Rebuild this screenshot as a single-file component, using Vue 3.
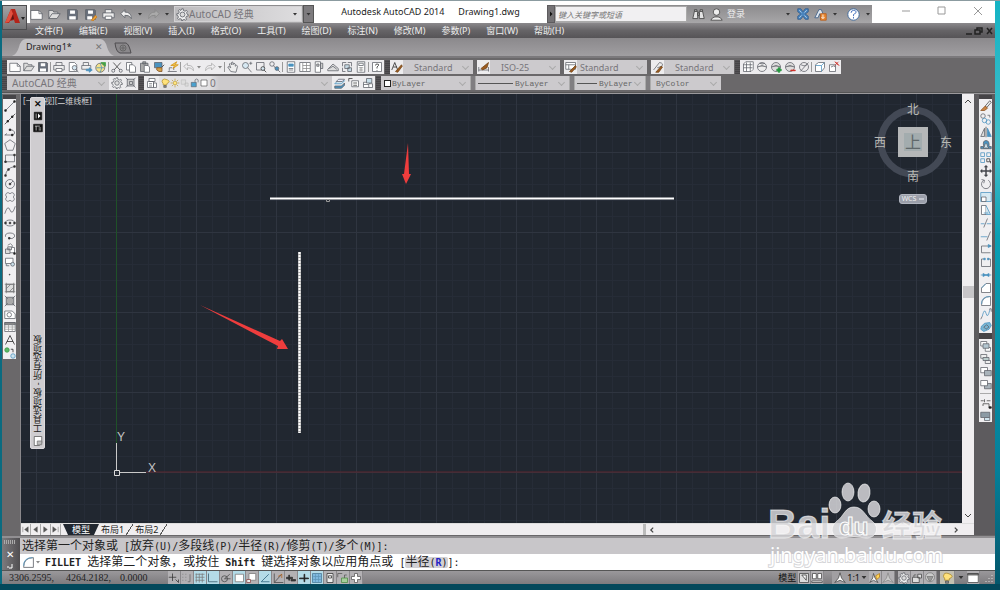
<script setup>
import { h } from 'vue'

const K = '#5d6068'
const B = '#4a92bf'
const page = `${K}|#fff|M3 2h7l3 3v9H3z`

// Each layer is "stroke|fill|path"
const icons = {
  new: [`${K}|#fdfdfd|M1 3h10l4 4v7H1z`, `${K}|none|M11 3v4h4`],
  open: [`${K}|#ddd|M1 13V3h5l1 2h5v2M1 13l4-6h10l-4 6z`],
  save: [`${K}|#69707c|M2 2h11l1 1v11H2z`, `none|#fff|M5 3h6v4H5zM4 10h8v4H4z`],
  saveas: [`${K}|#69707c|M2 2h11l1 1v11H2z`, `none|#fff|M5 3h6v4H5zM4 10h6v4H4z`, `#c77a1a|#e9a13b|M9 15l5-6 2 2-5 5z`],
  print: [`${K}|#eee|M4 6V2h8v4M1 6h14v6H1z`, `${K}|#fff|M4 10h8v4H4z`],
  undo: [`${K}|#eee|M1 7l5-5v3q8 0 8 8-3-5-8-4v3z`],
  redo: [`#888|#aaa|M15 7l-5-5v3q-8 0-8 8 3-5 8-4v3z`],
  undo2: [`#aaa|none|M1 7l5-4v3q8-1 8 7-3-5-8-4v3z`],
  redo2: [`#aaa|none|M15 7l-5-4v3q-8-1-8 7 3-5 8-4v3z`],
  gear: [`${K}|#f1f1f1|M7 1h2v2l2 1 2-1 1 1-1 2 1 2h1v2h-2l-1 2 1 2-1 1-2-1-2 1v1H7v-2l-2-1-2 1-1-1 1-2-1-2H1V7h2l1-2-1-2 1-1 2 1z`, `${K}|#ddd|M5 8a3 3 0 1 0 6 0 3 3 0 1 0-6 0`],
  preview: [page, `${K}|#d7e8f2|M7 9a3 3 0 1 0 6 0 3 3 0 1 0-6 0M12 11l3 4`],
  publish: [`${K}|#eee|M3 6V2h7v4M1 6h12v5H1z`, `${B}|${B}|M7 11h4V9l4 3-4 3v-2H7z`],
  dwf: [`${K}|#f3e18a|M1 9a6 6 0 1 0 12 0 6 6 0 1 0-12 0`, `${B}|none|M2 9h10M7 3q4 6 0 12`, `#46a147|#46a147|M8 2h6v5l-3-2z`],
  cut: [`#333|none|M3 2l9 10M13 2L4 12`, `${K}|none|M1 13a2 2 0 1 0 4 0 2 2 0 1 0-4 0M11 13a2 2 0 1 0 4 0 2 2 0 1 0-4 0`],
  copy: [`${K}|#fff|M2 2h7v10H2z`, `${K}|#fff|M6 5h5l3 3v7H6z`],
  paste: [`${K}|#aaa|M2 3h10v11H2zM5 1h4v3H5z`, `${K}|#fff|M7 6h5l2 2v7H7z`],
  match: [`${K}|${B}|M2 2h10v7H2z`, `#805020|#d3a14b|M5 9h7v5H8l-3-2z`, `#333|none|M12 8l3-3`],
  block: [`${K}|none|M1 14h12M3 13V9h4M9 12V8`, `#d09316|#f3c24a|M5 6l8-5-2 4h4l-7 5 2-4z`],
  pan: [`${K}|#eee|M5 14L1 8q1-2 4 1L3 4q1-2 3 1V2q2-2 2 1v2q1-4 3-1v3q2-3 3 0l-2 8z`],
  zoom: [`${K}|#d7e8f2|M2 6a4 4 0 1 0 8 0 4 4 0 1 0-8 0`, `${K}|none|M9 9l5 6M11 3h4M13 1v4`],
  zoomw: [`${K}|none|M2 2h10v10H2z`, `#333|#d7e8f2|M8 10a2 2 0 1 0 5 0 2 2 0 1 0-5 0M12 12l3 3`],
  zoomp: [`${K}|none|M1 4a3 3 0 1 0 6 0 3 3 0 1 0-6 0M6 6l3 4`, `${K}|${B}|M8 10a2 2 0 1 0 5 0 2 2 0 1 0-5 0M12 12l3 3`],
  props: [`${K}|#fff|M3 1h10v14H3z`, `${B}|${B}|M5 4h6v3H5z`, `${K}|none|M5 10h6M5 12h6`],
  dcenter: [`${K}|#fff|M1 2h14v12H1z`, `#888|none|M5 2v12M5 6h10M5 10h10M10 2v12`],
  palette: [`${K}|#fff|M3 1h7v14H3z`, `${K}|#ccc|M10 3h3v7h-3zM5 4h3v3H5z`],
  sheet: [`${K}|#ddd|M1 11l7-7 7 6v3H1zM3 10l5-3 5 4`],
  markup: [`${K}|none|M2 7V2h5M9 2h5v5M2 9v5h4`, `${K}|#c5d9e4|M5 5h6v5H5zM9 9h5v5H9z`],
  calc: [`${K}|#fff|M3 1h10v14H3zM5 3h6v3H5z`, `#888|none|M5 9h6M5 12h6M8 8v6`],
  help: [`${K}|#fff|M2 2h12v12H2z`, `#222|none|M6 6q0-2 2-2 3 0 2 2l-2 2v2M8 12v1`],
  tstyle: [`#222|none|M1 12L5 2l4 10M3 8h5`, `#704417|#9c5b20|M6 14l8-9 1 2-6 8z`],
  dstyle: [`${K}|none|M1 8v6M14 8v6M1 12h13`, `#704417|#9c5b20|M4 10l10-8-2 7-6 3z`],
  tbstyle: [`${K}|#fff|M1 2h13v9H1zM1 5h13M5 5v6`, `#704417|#9c5b20|M6 14l8-8 1 2-6 7z`],
  mstyle: [`${K}|#eee|M2 12L10 2q6 1 3 5L7 9`, `#704417|#9c5b20|M5 15l7-8 2 1-5 7z`],
  sphere: [`${K}|#eee|M2 8a6 6 0 1 0 12 0 6 6 0 1 0-12 0`, `${K}|#bbb|M2 8q6-4 12 0M5 3q3 2 7 0`],
  spherep: [`${K}|#ddd|M2 8a6 6 0 1 0 12 0 6 6 0 1 0-12 0`, `${K}|#aaa|M2 8q6-4 12 0`, `#22963b|#22963b|M9 11h2V9h2v2h2v2h-2v2h-2v-2H9z`],
  spherem: [`${K}|#ddd|M2 8a6 6 0 1 0 12 0 6 6 0 1 0-12 0`, `${K}|#aaa|M2 8q6-4 12 0`, `#cf2a20|#cf2a20|M9 12h6v1H9z`],
  spheren: [`${K}|none|M2 8a6 6 0 1 0 12 0 6 6 0 1 0-12 0M3 14L14 2M4 5q4 3 8 0`],
  mesh: [`${K}|#fff|M2 4l3-3h10v10l-3 3H2z`, `${K}|none|M2 5h12M2 9h12M6 2v12M11 2v12`],
  box3: [`${K}|#fff|M2 5l4-3h8v7l-4 5H2z`, `${B}|none|M2 6h8v8M10 6l4-4`],
  box3x: [`${K}|#fff|M2 5h8v9H2zM4 8q4-3 6 0`, `#cf2a20|none|M9 1l5 5M14 1L9 6M10 1l5 5`],
  layers: [`${K}|#fff|M2 7h8v7H2zM2 10h8`, `${K}|#c9dfea|M6 2h7v6H6z`, `${K}|#fff|M9 9h5v5H9z`],
  layermgr: [`${K}|#fff|M4 2h8v4H4zM2 6h8v8H2zM10 8h4v6h-4z`, `${K}|none|M4 9h4M4 12h4`],
  stack: [`${B}|#cfe4ee|M1 9h9l4-4H5z`, `${K}|${B}|M1 12h9l4-4v3l-4 4H1z`, `${K}|#eef|M3 6h8l3-3H6z`],
  stackp: [`${K}|#fff|M5 5h9v8H5z`, `#333|none|M1 2h5M1 2v4M7 8h5M7 11h5`],
  bulb: [`#a58324|#ffe27b|M5 9q-3-3-1-6t8 0-1 6v2H5z`, `#555|#888|M6 12h4v3H6z`],
  sun: [`#b6902a|#ffe680|M5 8a3 3 0 1 0 6 0 3 3 0 1 0-6 0`, `#b6902a|none|M8 1v3M8 12v3M1 8h3M12 8h3M3 3l2 2M11 11l2 2M13 3l-2 2M5 11l-2 2`],
  faint: [`#bbb|#ddd|M2 3h7v7H2zM8 8h5v5H8z`],
  unlock: [`${K}|#4aa1cf|M2 7h8v7H2z`, `${K}|none|M8 7V3q3-3 5 0v4`],
  sq: [`#222|#fff|M2 2h12v12H2z`],
  wset: [`${K}|#ccc|M3 3h9v9H3z`, `${K}|none|M1 1l3 3M14 1l-3 3M1 14l3-3M14 14l-3-3M6 6h4v4H6z`],
  line: [`${K}|none|M2 14L14 2`, `#222|#222|M1 13h2v2H1zM13 1h2v2h-2z`],
  xline: [`#333|none|M1 15L15 1`, `#222|#222|M4 10h2v2H4zM10 4h2v2h-2z`],
  pline: [`${K}|none|M1 12h10q4-1 3-4t-6-3M1 12l3-2`, `#222|#222|M10 11h2v2h-2zM7 4h2v2H7z`],
  polygon: [`${K}|none|M8 1l7 5-3 9H4L1 6z`],
  rect: [`${K}|none|M2 4h12v9H2z`, `#333|#333|M1 12h2v2H1zM13 3h2v2h-2z`],
  arc: [`${K}|none|M2 14Q3 4 14 2`, `#333|#333|M1 13h2v2H1zM5 5h2v2H5zM13 1h2v2h-2z`],
  circle: [`${K}|none|M2 8a6 6 0 1 0 12 0 6 6 0 1 0-12 0M8 8l4-4`, `#333|#333|M7 7h2v2H7z`],
  cloud: [`${K}|none|M8 4a3 3 0 1 0-4 4 3 3 0 1 0 4 4 3 3 0 1 0 4-4 3 3 0 1 0-4-4`],
  spline: [`${K}|none|M1 13Q5 0 8 8t7-5`],
  ellipse: [`${K}|none|M2 8a6 4 0 1 0 12 0 6 4 0 1 0-12 0`, `#333|#333|M7 7h2v2H7zM1 7h2v2H1zM13 7h2v2h-2z`],
  earc: [`${K}|none|M2 9Q1 4 8 4t6 5q-3 4-7 2`, `#333|#333|M6 10h2v2H6z`],
  insert: [`${K}|#fff|M5 3q4-4 6 0v3h3v7H8`, `${K}|#ddd|M2 8h6v6H2zM5 5h5v4H5z`, `#222|#222|M13 13h2v2h-2z`],
  mkblock: [`${K}|#fff|M2 3h10v7H2z`, `${K}|#c9dfea|M9 11a2 2 0 1 0 5 0 2 2 0 1 0-5 0M3 10v3h4`],
  point: [`#444|#444|M7 7h1v1H7z`],
  hatch: [`${K}|#ddd|M3 3h10v10H3z`, `#777|none|M1 3h14M1 13h14M3 1v14M13 1v14M3 9l6-6M7 13l6-6`],
  grad: [`${K}|#aaa|M3 3h10v10H3z`, `${K}|none|M1 1l4 4M15 1l-4 4M1 15l4-4M15 15l-4-4`],
  region: [`${K}|#fff|M1 4h10l4 4v6H1z`, `${K}|none|M4 9a3 3 0 1 0 6 0 3 3 0 1 0-6 0`],
  table: [`${K}|#fff|M1 2h14v12H1z`, `${K}|#888|M1 2h14v3H1z`, `#999|none|M1 8h14M1 11h14M6 5v9M11 5v9`],
  mtext: [`#222|none|M2 14L8 2l6 12M4 10h8`],
  addsel: [`#3b9a45|#5bb865|M1 4a3 3 0 1 0 6 0 3 3 0 1 0-6 0`, `${B}|#cfe4ee|M9 12a3 3 0 1 0 6 0 3 3 0 1 0-6 0`, `#222|none|M9 3h3v4`],
  erase: [`#444|#eee|M7 8l6-7 2 2-6 7z`, `#8a4d1b|#c98544|M1 14l6-6 3 3-4 3z`],
  copyo: [`${K}|none|M1 4a3 3 0 1 0 6 0 3 3 0 1 0-6 0M10 3h3v3`, `${B}|none|M3 10a3 3 0 1 0 6 0 3 3 0 1 0-6 0M8 12a3 3 0 1 0 6 0 3 3 0 1 0-6 0`],
  mirror: [`${K}|#ddd|M1 14L6 3v11z`, `${B}|${B}|M15 14L10 3v11z`, `#444|none|M8 1v14`],
  offset: [`${K}|${B}|M1 13h14v-3h-3q1-8-4-8T5 10H1z`, `${K}|#cfe4ee|M4 12h8l-2-2q0-4-2-4t-2 4z`],
  array: [`${B}|none|M1 1h5v5H1zM9 1h5v5H9zM1 9h5v5H1z`, `#333|none|M9 9h4v4H9zM14 12v3`],
  move: [`none|#44474c|M8 0l3 3H9v4h4V5l3 3-3 3V9H9v4h2l-3 3-3-3h2V9H3v2L0 8l3-3v2h4V3H5z`],
  rotate: [`${K}|none|M5 3a6 6 0 1 0 6 0M2 2l4 1-1 4`],
  scale: [`${B}|#d7e9f2|M1 2h14v12H1z`, `${K}|#fff|M2 8h6v6H2z`],
  stretch: [`${K}|#fff|M2 2h6v12H2z`, `${B}|#cfe4ee|M8 2l6 12H8M5 12h6`],
  trim: [`${B}|none|M1 9h5M9 9h6`, `${K}|none|M5 14L10 2`],
  extend: [`${B}|none|M1 9h9`, `${K}|none|M9 14l5-12`],
  breakp: [`${K}|none|M14 4H2v9h12`, `${B}|${B}|M11 2l4 2-4 2z`],
  brk: [`${K}|none|M5 4H2v10h12V4h-3`, `${B}|${B}|M5 3h2v2H5zM10 3h2v2h-2z`],
  join: [`${B}|${B}|M4 6l4 2-4 2zM12 6L8 8l4 2z`, `${B}|none|M1 8h14`],
  chamfer: [`${K}|#fff|M2 14V8l6-6h6v12z`, `${B}|none|M2 8l6-6`],
  fillet: [`${K}|#fff|M2 14q0-12 12-12v12z`, `${B}|none|M2 12Q2 2 13 2`],
  blend: [`${B}|none|M3 11q3-12 5-4t5-4`, `${K}|none|M1 15l2-4M13 3V1h2v4`],
  explode: [`${B}|#79b5d3|M2 7l4-4 7-1 2 4-3 5-7 3-4-3z`, `${K}|none|M5 8l4-3 3 3-4 3z`],
  front: [`${K}|#fff|M1 2h8v6H1zM7 10h7v5H7z`, `${K}|#b3c6d0|M4 5h8v6H4z`],
  back: [`${K}|#eee|M1 2h8v5H1zM7 10h7v4H7z`, `${K}|#bcc|M4 6h8v4H4z`],
  above: [`${K}|#fff|M1 2h9v7H1z`, `${K}|#a9b3ba|M6 6h9v7H6z`],
  under: [`${K}|#a9b3ba|M6 6h9v7H6z`, `${K}|#fff|M1 2h9v7H1z`],
  annof: [`#444|none|M1 5h4M6 3v4M9 5h5M4 9h8v5M4 9v3`, `#222|#222|M12 13h3v2h-3z`],
  hatchb: [`${K}|#8c9ba5|M1 3h12v7H1z`, `${K}|#cfe4ee|M6 10h7v4H6z`],
  binoc: [`#444|#e4e4e4|M1 13l2-9h4v9zM9 13V4h4l2 9zM7 6h2v3H7zM3 2h3v2H3zM10 2h3v2h-3z`],
  user: [`#444|#eee|M4 5a4 4 0 1 0 8 0 4 4 0 1 0-8 0M1 15q2-4 5-4h4q3 0 5 4z`],
  exchange: [`#2a5689|#4b86bf|M1 1h4l3 4 3-4h4v4l-4 3 4 3v4h-4l-3-4-3 4H1v-4l4-3-4-3z`, `#c9dcec|none|M3 3l3 3M13 3l-3 3M3 13l3-3M13 13l-3-3`],
  a360: [`#3d5f86|#dfe7ef|M1 12L6 2h3l4 10H9l-2-5-2 5z`, `#b75d18|#e88730|M8 7h7v8H8z`, `#fff|none|M11 8v5M9 11l2 2 2-2`],
  qhelp: [`#2a5d99|#fff|M1 8a7 7 0 1 0 14 0 7 7 0 1 0-14 0`, `#2a5db2|none|M5 6q0-3 3-3 4 0 3 3L8 8v2M8 11v2`],
  sinfer: [`#333|none|M1 7h10M6 2v10M10 10l4 4M14 10v4`],
  ssnap: [`#666|none|M2 3h1M6 3h1M2 7h1M6 7h1M2 11h1M6 11h1M12 3v10H9`],
  sgrid: [`#777|none|M2 3h12M2 7h12M2 11h12M3 2v12M7 2v12M11 2v12`],
  sortho: [`#356|none|M2 2v11h12`],
  spolar: [`#444|none|M2 9a4 4 0 1 0 8 0 4 4 0 1 0-8 0M6 9l7-6M6 9h8`],
  sosnap: [`#777|#fff|M3 3h11v10H3z`],
  s3d: [`#777|#fff|M4 2h9v9H4z`, `#844|#eee|M1 10h5v4H1z`],
  sotrack: [`#255b75|none|M13 3L3 13h11`],
  sducs: [`#444|none|M3 2v12h12M3 14L13 3`, `#b56720|none|M8 6l5-3v5`],
  sdyn: [`#333|#333|M2 7h8v2H2zM5 4h1v7H5zM8 10h6v2H8z`],
  slwt: [`#222|#222|M2 8h12v1H2zM8 3h1v10H8z`],
  stpy: [`#477794|#7fb8de|M2 2h12v12H2z`, `#5f97b8|none|M3 6h10M3 10h10M6 3v10M10 3v10`],
  sqp: [`#333|#eee|M4 2h8v12H4zM6 5h4v3H6z`],
  ssc: [`#4b8a42|#a5cf9b|M6 8h8v6H6z`, `#555|none|M1 2h6M1 2v5M10 8V4h3`],
  splus: [`#555|#fff|M6 2h4v4h4v4h-4v4H6v-4H2V6h4z`],
  smodel: [`#444|#ddd|M2 2h12v12H2z`, `#333|#fff|M5 4h6v7z`],
  sview: [`#444|#fff|M2 2h5v7H2zM9 2h5v7H9zM1 12h14v2H1z`],
  anno: [`#444|#fff|M8 1l2 7 5 6-7-3-7 3 5-6z`],
  annoy: [`#444|#fff|M6 2l2 6 4 6-6-3-5 3 4-6z`, `#b67b19|#ffd65c|M9 5l5-3v5l-4 3z`],
  annog: [`#888|#ccc|M8 1l2 7 5 6-7-3-7 3 5-6z`],
  slock: [`#444|#ddd|M2 7h9v7H2zM9 3h5v5H9zM4 7V4h3`],
  shw: [`#777|#ccc|M2 7a6 6 0 1 0 12 0 6 6 0 1 0-12 0`, `#777|#999|M4 6h8l-3 6H7z`],
  sclean: [`#444|#fff|M1 2h14v12H1z`, `#444|#888|M1 2h14v2H1z`],
  palh: [`#111|#111|M2 2h12v12H2z`, `#fff|none|M5 4v8`, `none|#fff|M8 4l4 4-4 4z`],
  palp: [`#111|#111|M1 2h14v12H1z`, `#fff|none|M3 5h8M5 5v7M9 8h4M9 11h4`],
  palb: [`#555|#fff|M3 2h10v9l-3 3H3z`, `#777|#bbb|M7 8h6v5H7z`]
}

const Icon = (p) =>
  h('svg', { viewBox: '0 0 16 16', 'aria-hidden': 'true' },
    icons[p.name].map((layer) => {
      const [stroke, fill, d] = layer.split('|')
      return h('path', { d, stroke, fill, 'stroke-width': 1 })
    }))
Icon.props = ['name']

const quick = ['new', 'open', 'save', 'saveas', 'print', 'undo', 'v', 'redo', 'v']
const menus = ['文件(F)', '编辑(E)', '视图(V)', '插入(I)', '格式(O)', '工具(T)', '绘图(D)', '标注(N)', '修改(M)', '参数(P)', '窗口(W)', '帮助(H)']
const standard = ['new', 'open', 'save', '|', 'print', 'preview', 'publish', 'dwf', '|', 'cut', 'copy', 'paste', 'match', 'block', '|', 'undo2', 'v', 'redo2', 'v', '|', 'pan', 'zoom', 'zoomw', 'zoomp', '|', 'props', 'dcenter', 'palette', 'sheet', 'markup', 'calc', '|', 'help']
const styles = [
  { icon: 'tstyle', value: 'Standard', label: '文字样式', cls: 'in-11' },
  { icon: 'dstyle', value: 'ISO-25', label: '标注样式', cls: 'in-11' },
  { icon: 'tbstyle', value: 'Standard', label: '表格样式', cls: 'in-3' },
  { icon: 'mstyle', value: 'Standard', label: '多重引线样式', cls: 'in-11' }
]
const meshTools = ['mesh', 'sphere', 'spherep', 'spherem', 'spheren', '|', 'box3', 'box3x']
const draw = ['line', 'xline', 'pline', 'polygon', 'rect', 'arc', 'circle', 'cloud', 'spline', 'ellipse', 'earc', 'insert', 'mkblock', 'point', 'hatch', 'grad', 'region', 'table', 'mtext', 'addsel']
const modify = ['erase', 'copyo', 'mirror', 'offset', 'array', 'move', 'rotate', 'scale', 'stretch', 'trim', 'extend', 'breakp', 'brk', 'join', 'chamfer', 'fillet', 'blend', 'explode']
const order = ['front', 'back', 'above', 'under', '|', 'annof', 'hatchb']
const toggles = [['sinfer'], ['ssnap'], ['sgrid', 1], ['sortho', 1], ['spolar'], ['sosnap', 1], ['s3d'], ['sotrack', 1], ['sducs'], ['sdyn'], ['slwt', 1], ['stpy', 1], ['sqp'], ['ssc'], ['splus']]
</script>

<template>
  <div class="desktop">
    <div class="window">
      <header class="top">
        <button class="logo" aria-label="应用程序菜单">
          <svg viewBox="0 0 24 24" aria-hidden="true">
            <path d="M2 17L8 3h4l5 14h-5l-1-3-4 1-1 2z" fill="#b3241a" />
            <path d="M8 3L2 17l4-1 4-8z" fill="#e2513f" />
            <path d="M10 8l-2 6 3-1z" fill="#5d1512" />
            <path d="M18 11h4l-2 3z" fill="#222" />
          </svg>
        </button>
        <div class="titlebar">
          <div class="quick">
            <template v-for="(q, i) in quick" :key="i">
              <i v-if="q === 'v'" class="dd tight"></i>
              <button v-else class="qbtn" :aria-label="q"><Icon :name="q" class="ic13" /></button>
            </template>
            <label class="workspace">
              <Icon name="gear" class="ic13" />
              <select aria-label="工作空间"><option>AutoCAD 经典</option></select>
              <i class="dd"></i>
            </label>
            <button class="more" aria-label="自定义"><i class="dd"></i></button>
          </div>
          <div class="title"><span>Autodesk AutoCAD 2014</span><span>Drawing1.dwg</span></div>
          <div class="search">
            <button class="expand" aria-label="展开"></button>
            <input type="text" placeholder="键入关键字或短语" aria-label="搜索">
            <button class="qbtn" aria-label="查找"><Icon name="binoc" class="ic13" /></button>
            <button class="login"><Icon name="user" class="ic13" />登录</button>
            <i class="dd"></i>
            <button class="qbtn" aria-label="Exchange"><Icon name="exchange" class="ic11" /></button>
            <button class="qbtn" aria-label="A360"><Icon name="a360" class="ic13" /></button>
            <i class="dd"></i>
            <button class="qbtn helpbtn" aria-label="帮助"><Icon name="qhelp" class="ic13" /></button>
            <i class="dd"></i>
          </div>
          <div class="winbtns">
            <button aria-label="最小化"><svg viewBox="0 0 10 10"><path d="M1 5h8" /></svg></button>
            <button aria-label="最大化"><svg viewBox="0 0 10 10"><path d="M1 1h7v7H1z" /></svg></button>
            <button aria-label="关闭"><svg viewBox="0 0 10 10"><path d="M1 1l8 8M9 1L1 9" /></svg></button>
          </div>
        </div>
        <nav class="menubar">
          <a v-for="m in menus" :key="m" href="#">{{ m }}</a>
          <svg class="mdi" viewBox="0 0 28 10" aria-hidden="true">
            <path d="M1 8h6M10 4h5v4h-5zM12 4V2h5v4h-2M22 2l5 6M27 2l-5 6" />
          </svg>
        </nav>
      </header>

      <div class="filetabs">
        <div class="filetab">
          <svg class="shape" viewBox="0 0 102 18" preserveAspectRatio="none" aria-hidden="true">
            <path d="M0 18Q5 16 7 9Q9 1 14 1H88Q93 1 95 9Q97 16 102 18z" fill="#c3c1c4" />
          </svg>
          <span>Drawing1*</span><button aria-label="关闭图形">✕</button>
        </div>
        <button class="addtab" aria-label="新图形">
          <svg viewBox="0 0 18 12" aria-hidden="true">
            <path d="M1 1h11q3 1 5 10H6Q2 10 1 1z" fill="#8a888b" stroke="#4f4d50" />
            <path d="M6 6a3 3 0 1 0 6 0 3 3 0 1 0-6 0M9 4v4M7 6h4" fill="none" stroke="#666" />
          </svg>
        </button>
      </div>

      <div class="toolrows">
        <div class="toolrow">
          <i class="grip"></i>
          <div class="bar">
            <template v-for="(t, i) in standard" :key="i">
              <i v-if="t === '|'" class="sep"></i>
              <i v-else-if="t === 'v'" class="dd pale"></i>
              <button v-else class="tb" :aria-label="t"><Icon :name="t" class="ic11" /></button>
            </template>
          </div>
          <i class="grip"></i>
          <div v-for="s in styles" :key="s.label" class="combo">
            <button class="tb" :aria-label="s.label"><Icon :name="s.icon" class="ic11" /></button>
            <div class="pick w70">
              <select :class="s.cls" :aria-label="s.label"><option>{{ s.value }}</option></select>
            </div>
          </div>
          <i class="grip"></i>
          <div class="bar">
            <template v-for="(t, i) in meshTools" :key="i">
              <i v-if="t === '|'" class="sep"></i>
              <button v-else class="tb" :aria-label="t"><Icon :name="t" class="ic11" /></button>
            </template>
          </div>
        </div>
        <div class="toolrow">
          <i class="grip"></i>
          <div class="pick w102">
            <select class="in-5 big" aria-label="工作空间"><option>AutoCAD 经典</option></select>
          </div>
          <div class="bar">
            <button class="tb" aria-label="设置"><Icon name="gear" class="ic11" /></button>
            <button class="tb" aria-label="我的工作空间"><Icon name="wset" class="ic11" /></button>
          </div>
          <i class="grip"></i>
          <div class="bar"><button class="tb" aria-label="图层特性"><Icon name="layermgr" class="ic11" /></button></div>
          <div class="pick w172 layer">
            <Icon name="bulb" class="ic9" /><Icon name="sun" class="ic9" /><Icon name="faint" class="ic9" /><Icon name="unlock" class="ic9" /><Icon name="sq" class="ic8" />
            <select class="in-2 big" aria-label="图层"><option>0</option></select>
          </div>
          <div class="bar">
            <button class="tb" aria-label="置为当前"><Icon name="stack" class="ic11" /></button>
            <button class="tb" aria-label="上一个图层"><Icon name="stackp" class="ic11" /></button>
            <button class="tb" aria-label="图层状态"><Icon name="layers" class="ic11" /></button>
          </div>
          <i class="grip"></i>
          <div class="pick w89 mono"><i class="swatch"></i><select class="in-1" aria-label="颜色"><option>ByLayer</option></select></div>
          <i class="split"></i>
          <div class="pick w93 mono"><i class="rule long"></i><select class="in-2" aria-label="线型"><option>ByLayer</option></select></div>
          <i class="split"></i>
          <div class="pick w70 mono"><i class="rule"></i><select class="in-2" aria-label="线宽"><option>ByLayer</option></select></div>
          <i class="split"></i>
          <div class="pick w70 mono"><select class="in-5" aria-label="打印样式"><option>ByColor</option></select></div>
        </div>
      </div>

      <main class="work">
        <aside class="side left">
          <i class="hgrip"></i>
          <div class="vbar">
            <button v-for="t in draw" :key="t" class="tb" :aria-label="t"><Icon :name="t" class="ic11" /></button>
          </div>
        </aside>

        <section class="view">
          <div class="canvas">
            <svg class="drawing" aria-hidden="true">
              <defs>
                <pattern id="minor" x="15" y="58" width="16" height="16" patternUnits="userSpaceOnUse">
                  <path d="M0.500 0V16M0 0.500H16" stroke="#262c37" fill="none" />
                </pattern>
                <pattern id="major" x="15" y="58" width="80" height="80" patternUnits="userSpaceOnUse">
                  <path d="M0.500 0V80M0 0.500H80" stroke="#2f3540" fill="none" />
                </pattern>
              </defs>
              <rect width="100%" height="100%" fill="url(#minor)" />
              <rect width="100%" height="100%" fill="url(#major)" />
              <path d="M95.500 0V350" stroke="#1f5128" />
              <line x1="125" y1="378" x2="100%" y2="378" stroke="#5c262e" />
              <path d="M95.500 349V376M98 378.500H125" stroke="#c9c9c9" />
              <path d="M93.500 376.500h5v5h-5z" stroke="#ddd" fill="none" />
              <text x="96" y="347" class="axis">Y</text>
              <text x="127" y="378" class="axis">X</text>
              <path d="M249 104.500H653" stroke="#fff" stroke-width="2" />
              <path d="M305.500 105.500h3v2h-3z" stroke="#999" fill="#222831" />
              <path d="M278.500 158V339" stroke="#a9a9a9" stroke-width="3" />
              <path d="M278.500 158V339" stroke="#fff" stroke-width="2" stroke-dasharray="2 1" />
              <path d="M387 49L388 80H390L385 90L381 80H383z" fill="#ee3d3d" />
              <path d="M179 211L259 247L261 245L267 255L256 255L257 252z" fill="#ee3d3d" />
            </svg>
            <span class="viewlabel">[一</span>
            <span class="viewlabel rest">视][二维线框]</span>
            <div class="palette">
              <button class="pclose" aria-label="关闭选项板">✕</button>
              <button aria-label="自动隐藏"><Icon name="palh" class="ic9" /></button>
              <button aria-label="特性"><Icon name="palp" class="ic9" /></button>
              <span class="ptitle">工具选项板 - 所有选项板</span>
              <Icon name="palb" class="ic11" />
            </div>
            <div class="compass">
              <svg viewBox="0 0 84 94" aria-hidden="true">
                <circle cx="42" cy="42" r="32" fill="none" stroke="#434955" stroke-width="7" />
                <path d="M27 27h30v30H27z" fill="#b5b7b8" />
                <path d="M33 33h18v18H33z" fill="#a3acae" />
                <text x="42" y="14">北</text>
                <text x="9" y="47">西</text>
                <text x="75" y="47">东</text>
                <text x="42" y="81">南</text>
                <text x="42" y="48" class="up">上</text>
              </svg>
              <button class="wcs">WCS <i></i></button>
            </div>
          </div>
          <div class="vscroll">
            <svg viewBox="0 0 10 10"><path d="M2 7l3-3 3 3" /></svg>
            <i class="thumb"></i>
            <svg class="down" viewBox="0 0 10 10"><path d="M2 3l3 3 3-3" /></svg>
          </div>
          <div class="layouts">
            <button class="nav" aria-label="第一个"><svg viewBox="0 0 10 10"><path d="M2 2v6M8 2L4 5l4 3z" /></svg></button>
            <button class="nav" aria-label="上一个"><svg viewBox="0 0 10 10"><path d="M7 2L3 5l4 3z" /></svg></button>
            <button class="nav" aria-label="下一个"><svg viewBox="0 0 10 10"><path d="M3 2l4 3-4 3z" /></svg></button>
            <button class="nav" aria-label="最后一个"><svg viewBox="0 0 10 10"><path d="M8 2v6M2 2l4 3-4 3z" /></svg></button>
            <button class="lay on">模型</button>
            <button class="lay">布局1</button>
            <i class="slash"></i>
            <button class="lay">布局2</button>
            <i class="slash"></i>
            <div class="hscroll">
              <i class="hsplit"></i>
              <svg viewBox="0 0 10 10"><path d="M6 3L4 5l2 2" /></svg>
              <svg class="end" viewBox="0 0 10 10"><path d="M4 3l2 2-2 2" /></svg>
            </div>
          </div>
        </section>

        <aside class="side right">
          <i class="hgrip"></i>
          <div class="vbar">
            <button v-for="t in modify" :key="t" class="tb" :aria-label="t"><Icon :name="t" class="ic11" /></button>
          </div>
          <i class="hgrip tall"></i>
          <div class="vbar">
            <template v-for="(t, i) in order" :key="i">
              <i v-if="t === '|'" class="hsep"></i>
              <button v-else class="tb" :aria-label="t"><Icon :name="t" class="ic11" /></button>
            </template>
          </div>
        </aside>
      </main>

      <section class="command">
        <div class="cmdgrip"><i class="dots"></i><button aria-label="关闭命令行">✕</button><svg viewBox="0 0 10 6" aria-hidden="true"><path d="M2 4h2M7 1v4H4" /></svg></div>
        <div class="cmdlines">
          <p class="history"><b>选择第一个对象或</b> [<b>放弃</b>(U)/<b>多段线</b>(P)/<b>半径</b>(R)/<b>修剪</b>(T)/<b>多个</b>(M)]:</p>
          <p class="prompt">
            <Icon name="fillet" class="ic13" /><i class="dd pale"></i><span class="cmd"><strong>FILLET</strong> <b>选择第二个对象，或按住</b> <em>Shift</em> <b>键选择对象以应用角点或</b> [<span class="opt"><b>半径</b>(<u>R</u>)</span>]:</span>
          </p>
        </div>
      </section>

      <footer class="status">
        <span class="coords"><span>3306.2595,</span><span>4264.2182,</span><span>0.0000</span></span>
        <button v-for="t in toggles" :key="t[0]" class="tog" :class="{ lit: t[1] }" :aria-label="t[0]"><Icon :name="t[0]" class="ic11" /></button>
        <span class="fill"></span>
        <button class="txt">模型</button>
        <button class="tog" aria-label="布局"><Icon name="smodel" class="ic11" /></button>
        <button class="tog" aria-label="快速查看"><Icon name="sview" class="ic11" /></button>
        <span class="gap"></span>
        <button class="txt scale"><Icon name="anno" class="ic11" />1:1<i class="dd"></i></button>
        <button class="tog" aria-label="注释可见性"><Icon name="annoy" class="ic11" /></button>
        <button class="tog" aria-label="自动缩放"><Icon name="annog" class="ic11" /></button>
        <i class="ssep"></i>
        <button class="tog" aria-label="切换工作空间"><Icon name="gear" class="ic11" /></button>
        <button class="tog" aria-label="锁定"><Icon name="slock" class="ic11" /></button>
        <button class="tog" aria-label="硬件加速"><Icon name="shw" class="ic11" /></button>
        <i class="ssep"></i>
        <button class="tog warm" aria-label="隔离对象"><Icon name="bulb" class="ic11" /></button>
        <i class="dd tail"></i>
        <button class="tog" aria-label="全屏显示"><Icon name="sclean" class="ic11" /></button>
        <svg class="resize" viewBox="0 0 10 10" aria-hidden="true"><path d="M8 2v1M8 5v1M8 8v1M5 5v1M5 8v1M2 8v1" /></svg>
      </footer>
    </div>

    <svg class="mark" viewBox="0 0 184 106" aria-hidden="true">
      <g class="paw">
        <ellipse cx="70" cy="29" rx="6" ry="8" />
        <ellipse cx="83" cy="16" rx="6" ry="9" />
        <ellipse cx="99" cy="17" rx="6" ry="9" transform="rotate(8 99 17)" />
        <ellipse cx="109" cy="33" rx="6" ry="8" />
        <path d="M89 31C80 31 79 40 72 45C64 51 66 62 77 62Q89 59 101 62C112 62 115 51 107 45C100 40 98 31 89 31z" />
        <text x="3" y="62" class="wbig">Bai</text>
        <text x="117" y="60" class="wcjk">经验</text>
      </g>
      <text x="74" y="59" class="wdu">du</text>
      <text x="5" y="86" class="wurl">jingyan.baidu.com</text>
    </svg>
  </div>
</template>

<style>
html, body { margin: 0; background: #04485b; }
</style>

<style scoped>
* { box-sizing: border-box; }
.desktop {
  position: relative;
  height: 100vh;
  padding: 1px 5px 6px 2px;
  display: flex;
  background:
    linear-gradient(#8b9ba0 0 1px, transparent 1px),
    linear-gradient(#03485b, #03485b) bottom / 100% 6px no-repeat,
    linear-gradient(90deg, #0a6b80 0 3px, transparent 3px),
    linear-gradient(#13b3c4, #46bfc9 25%, #0b9fb3 40%, #057f99 80%, #045569);
  font: 9px/12px "Noto Sans", "Noto Sans CJK SC", sans-serif;
  color: #222;
}
.window { flex: 1; min-width: 0; display: flex; flex-direction: column; background: #6a686a; }
button, select, input { font: inherit; color: inherit; border: 0; padding: 0; margin: 0; background: none; border-radius: 0; outline: 0; }
button { display: flex; align-items: center; justify-content: center; flex: none; }
i { font-style: normal; flex: none; }
svg { display: block; flex: none; }
.ic13 { width: 13px; height: 13px; }
.ic11 { width: 12px; height: 12px; }
.ic9 { width: 10px; height: 10px; }
.ic8 { width: 8px; height: 8px; }
.dd { width: 6px; height: 3px; background: #333; clip-path: polygon(10% 0, 90% 0, 50% 100%); }
.dd.pale { background: #888; }
.dd.tight { margin: 0 -1px; }

.top { position: relative; }
.logo { position: absolute; left: 0; top: 4px; width: 25px; height: 25px; border: 1px solid #4e4e50; background: linear-gradient(#a4a4a6, #747476); z-index: 1; }
.logo svg { width: 24px; height: 24px; }
.titlebar { display: flex; height: 22px; background: #fff; padding-top: 4px; }
.quick { display: flex; align-items: center; gap: 5px; margin-left: 28px; width: 284px; background: linear-gradient(#8c8b8d, #a7a6a8); }
.qbtn { width: 13px; height: 18px; }
.workspace { display: flex; align-items: center; flex: 1; align-self: stretch; margin: 1px 0; padding: 0 3px 0 1px; background: linear-gradient(90deg, #bdbcbe, #dedddf); border: 1px solid #d2d1d3; }
.workspace select { flex: 1; min-width: 0; appearance: none; font-size: 10px; color: #77757a; line-height: 14px; }
.more { width: 11px; align-self: stretch; margin-left: -4px; background: #7d7b7e; border: 1px solid #555; }
.title { flex: 1; display: flex; justify-content: center; gap: 14px; align-items: flex-start; white-space: pre; padding-top: 1px; color: #222; }
.search { display: flex; align-items: center; width: 325px; background: linear-gradient(#8c8b8d, #a7a6a8); gap: 5px; padding-right: 1px; }
.expand { width: 8px; align-self: stretch; background: #747275; border: 1px solid #5e5c5f; }
.expand::after { content: ""; width: 3px; height: 6px; background: #111; clip-path: polygon(0 0, 100% 50%, 0 100%); }
.search input { width: 132px; height: 16px; margin-left: -5px; background: #f1f0f2; border: 1px solid #aaa; padding-left: 2px; font-size: 8px; font-style: italic; }
.search input::placeholder { color: #777; opacity: 1; }
.login { gap: 4px; color: #eee; margin-right: auto; font-size: 9px; }
.helpbtn { margin-left: 4px; }
.winbtns { display: flex; align-items: flex-start; width: 123px; padding: 1px 12px 0 29px; justify-content: space-between; }
.winbtns svg { width: 10px; height: 10px; fill: none; stroke: #999; }
.menubar { display: flex; align-items: center; gap: 16px; height: 15px; padding-left: 33px; background: linear-gradient(#8b898c, #666467 50%, #565457); }
.menubar a { color: #eee; text-decoration: none; white-space: nowrap; }
.mdi { width: 28px; height: 10px; margin-left: auto; margin-right: 2px; fill: none; stroke: #222; stroke-width: 1.5; }

.filetabs { display: flex; align-items: flex-end; height: 20px; padding-left: 10px; background: linear-gradient(#8b898c, #a09ea1); border-bottom: 2px solid #7b797c; }
.filetab { position: relative; display: flex; align-items: center; justify-content: space-between; width: 102px; height: 18px; padding: 0 11px 0 14px; }
.filetab .shape { position: absolute; inset: 0; width: 100%; height: 100%; }
.filetab span, .filetab button { position: relative; }
.filetab button { color: #777; }
.addtab { margin: 0 0 2px 0; }
.addtab svg { width: 18px; height: 12px; }

.toolrows { display: flex; flex-direction: column; gap: 2px; padding: 2px 0 3px 0; border-bottom: 1px solid #9b999c; box-shadow: inset 0 -1px #555; }
.toolrow { display: flex; height: 14px; }
.grip { width: 5px; margin: 0 0 0 1px; background: repeating-linear-gradient(#555356 0 1px, #464447 1px 2px); }
.toolrow .grip:first-child { margin-left: 0; }
.bar { display: flex; align-items: center; gap: 1px; padding: 0 1px; background: #edecee; }
.sep { width: 1px; height: 10px; background: #999; }
.split { width: 6px; border-right: 1px solid #aaa; border-left: 1px solid #aaa; background: #807e81; }
.tb { width: 13px; height: 13px; }
.combo { display: flex; background: #edecee; margin-right: 4px; }
.combo:nth-last-child(3) { margin-right: 0; }
.pick { position: relative; display: flex; align-items: center; background: #cccacd; color: #77757a; }
.pick::after { content: ""; position: absolute; right: 5px; top: 4px; width: 4px; height: 4px; border: solid #aaa; border-width: 0 1px 1px 0; rotate: 45deg; }
.pick select { appearance: none; flex: 1; min-width: 0; height: 14px; line-height: 13px; }
.w70 { width: 70px; } .w89 { width: 89px; } .w93 { width: 93px; } .w102 { width: 102px; } .w172 { width: 173px; }
.in-11 { padding-left: 11px; } .in-5 { padding-left: 5px; } .in-3 { padding-left: 3px; } .in-2 { padding-left: 2px; } .in-1 { padding-left: 1px; }
.big { font-size: 10px; }
.layer { padding-left: 1px; background: linear-gradient(90deg, #e2e1e3 50px, #cccacd 60px); }
.mono { font-family: "Liberation Mono", monospace; font-size: 8px; color: #666; }
.swatch { width: 7px; height: 7px; border: 1px solid #222; background: #fff; margin-left: 3px; }
.rule { width: 20px; height: 1px; background: #555; margin-left: 2px; }
.rule.long { width: 35px; }

.work { flex: 1; display: flex; min-height: 0; }
.side { display: flex; flex-direction: column; flex: none; }
.left { width: 19px; padding: 1px 4px 0 1px; border-right: 1px solid #8a888b; }
.right { width: 21px; padding: 1px 3px 0 5px; background: #5d5b5e; }
.hgrip { height: 4px; background: #464447; }
.hgrip.tall { height: 6px; }
.vbar { display: flex; flex-direction: column; align-items: center; background: #f0eff1; }
.hsep { width: 11px; height: 1px; background: #aaa; margin: 2px 0; }
.view { flex: 1; min-width: 0; display: grid; grid-template: 1fr 12px / 1fr 12px; }
.canvas { position: relative; overflow: hidden; background: #212730; }
.drawing { position: absolute; inset: 0; width: 100%; height: 100%; }
.axis { font: 12px "Liberation Sans", sans-serif; fill: #c4c4c4; }
.viewlabel { position: absolute; left: 2px; top: 1px; font-size: 8px; color: #d4d4d4; white-space: nowrap; }
.viewlabel.rest { left: 23px; }
.palette { position: absolute; left: 9px; top: 3px; bottom: 74px; width: 15px; display: flex; flex-direction: column; align-items: center; gap: 2px; padding: 1px 0; background: #cfcdd0; border: 1px solid #dddbde; border-radius: 2px; }
.palette button { height: 10px; }
.pclose { font-size: 9px; font-weight: bold; color: #111; }
.ptitle { margin-top: auto; writing-mode: vertical-rl; rotate: 180deg; line-height: 13px; white-space: nowrap; }
.compass { position: absolute; right: 7px; top: 6px; width: 84px; }
.compass svg { width: 84px; height: 94px; }
.compass text { font: 12px "Noto Sans CJK SC", sans-serif; fill: #b9b9b4; text-anchor: middle; }
.compass .up { font-size: 16px; fill: #60686b; }
.wcs { width: 28px; height: 10px; margin: 0 auto; border-radius: 3px; background: #9b9faa; border: 1px solid #b1b5bf; font-size: 7px; line-height: 8px; color: #eee; gap: 3px; }
.wcs i { width: 5px; height: 2px; background: #c4c8d0; }
.vscroll { display: grid; grid-template-rows: 10px 45fr 12px 53fr 10px; justify-items: center; padding: 2px 0; background: #f0eef0; }
.vscroll svg { width: 10px; height: 10px; fill: none; stroke: #444; }
.thumb { grid-row: 3; width: 11px; height: 12px; background: #c7c5c8; }
.vscroll .down { grid-row: 5; }
.layouts { grid-column: 1 / -1; display: flex; background: #f0eef0; border-top: 1px solid #ddd; }
.nav { width: 10px; border-right: 1px solid #aaa; }
.nav svg { width: 9px; height: 9px; fill: #555; stroke: #555; stroke-width: 0.5; }
.lay { padding: 0 2px; font-size: 9px; line-height: 11px; }
.lay.on { width: 36px; color: #fff; background: #212730; clip-path: polygon(0 0, 100% 0, 86% 100%, 14% 100%); margin-left: 2px; }
.slash { width: 7px; background: linear-gradient(to bottom right, transparent 46%, #555 47% 54%, transparent 55%); }
.hscroll { flex: 1; display: flex; align-items: center; }
.hscroll svg { width: 12px; height: 12px; fill: none; stroke: #444; }
.hsplit { margin-left: 59%; width: 3px; height: 11px; background: #bbb; }
.hscroll .end { margin-left: auto; margin-right: 12px; }

.command { display: flex; margin-top: 1px; border-top: 2px solid #918f92; }
.cmdgrip { width: 18px; display: flex; flex-direction: column; align-items: center; justify-content: space-between; padding: 2px 2px 1px 0; background: linear-gradient(90deg, #7d7b7e, #504e51); }
.dots { width: 12px; height: 4px; background: repeating-linear-gradient(90deg, #aaa 0 1px, transparent 1px 2px); }
.cmdgrip button { font-size: 10px; color: #fff; height: 12px; }
.cmdgrip svg { width: 10px; height: 6px; fill: none; stroke: #fff; }
.cmdlines { flex: 1; min-width: 0; color: #222; font: 10px/16px "DejaVu Sans Mono", "Noto Sans CJK SC", monospace; }
.cmdlines p { margin: 0; height: 16px; white-space: pre; }
.cmdlines b { font: 12px/14px "Noto Sans CJK SC", sans-serif; }
.history { background: #c8c6c9; padding-left: 2px; }
.cmdlines .prompt { display: flex; align-items: center; background: #fff; padding-left: 2px; white-space: normal; }
.cmd { white-space: pre; margin-left: 4px; }
.prompt em { font-style: normal; font-weight: bold; }
.opt { background: #d2d0d4; border-radius: 2px; }
.opt u { text-decoration: none; color: #2323c4; font-weight: bold; }

.status { display: flex; align-items: center; height: 14px; padding-right: 1px; border-top: 1px solid #555; background: linear-gradient(#9a989b, #7d7b7e); }
.coords { width: 166px; display: flex; gap: 12px; padding-left: 7px; font: 10px/12px "Liberation Serif", serif; color: #222; }
.coords span:last-child { margin-left: -3px; }
.tog { width: 13px; height: 13px; background: #b3b1b4; border-right: 1px solid #8a888b; }
.tog.lit { background: #b4dbe7; }
.tog.warm { width: 15px; background: #c4c0b0; }
.fill { flex: 1; }
.gap { width: 8px; }
.txt { font-size: 9px; padding: 0 2px; height: 13px; color: #111; }
.scale { gap: 1px; background: #a19fa2; }
.ssep { width: 3px; height: 13px; background: #6a686b; }
.tail { margin: 0 3px; }
.resize { width: 10px; height: 10px; margin-left: 4px; stroke: #ddd; }

.mark { position: absolute; right: 51px; bottom: 8px; width: 184px; height: 106px; pointer-events: none; }
.paw { fill: #d6d6d9; fill-opacity: 0.85; stroke: #fff; stroke-opacity: 0.6; }
.wbig { font: bold 40px "Liberation Sans", sans-serif; }
.wcjk { font: bold 30px "Noto Sans CJK SC", sans-serif; }
.wdu { font: bold 24px "Liberation Sans", sans-serif; fill: #b9babd; stroke: #fff; stroke-width: 1; }
.wurl { font: 20px "Noto Sans", sans-serif; fill: #fff; stroke: #c4c4c8; stroke-width: 2; stroke-opacity: 0.7; paint-order: stroke; }
</style>
